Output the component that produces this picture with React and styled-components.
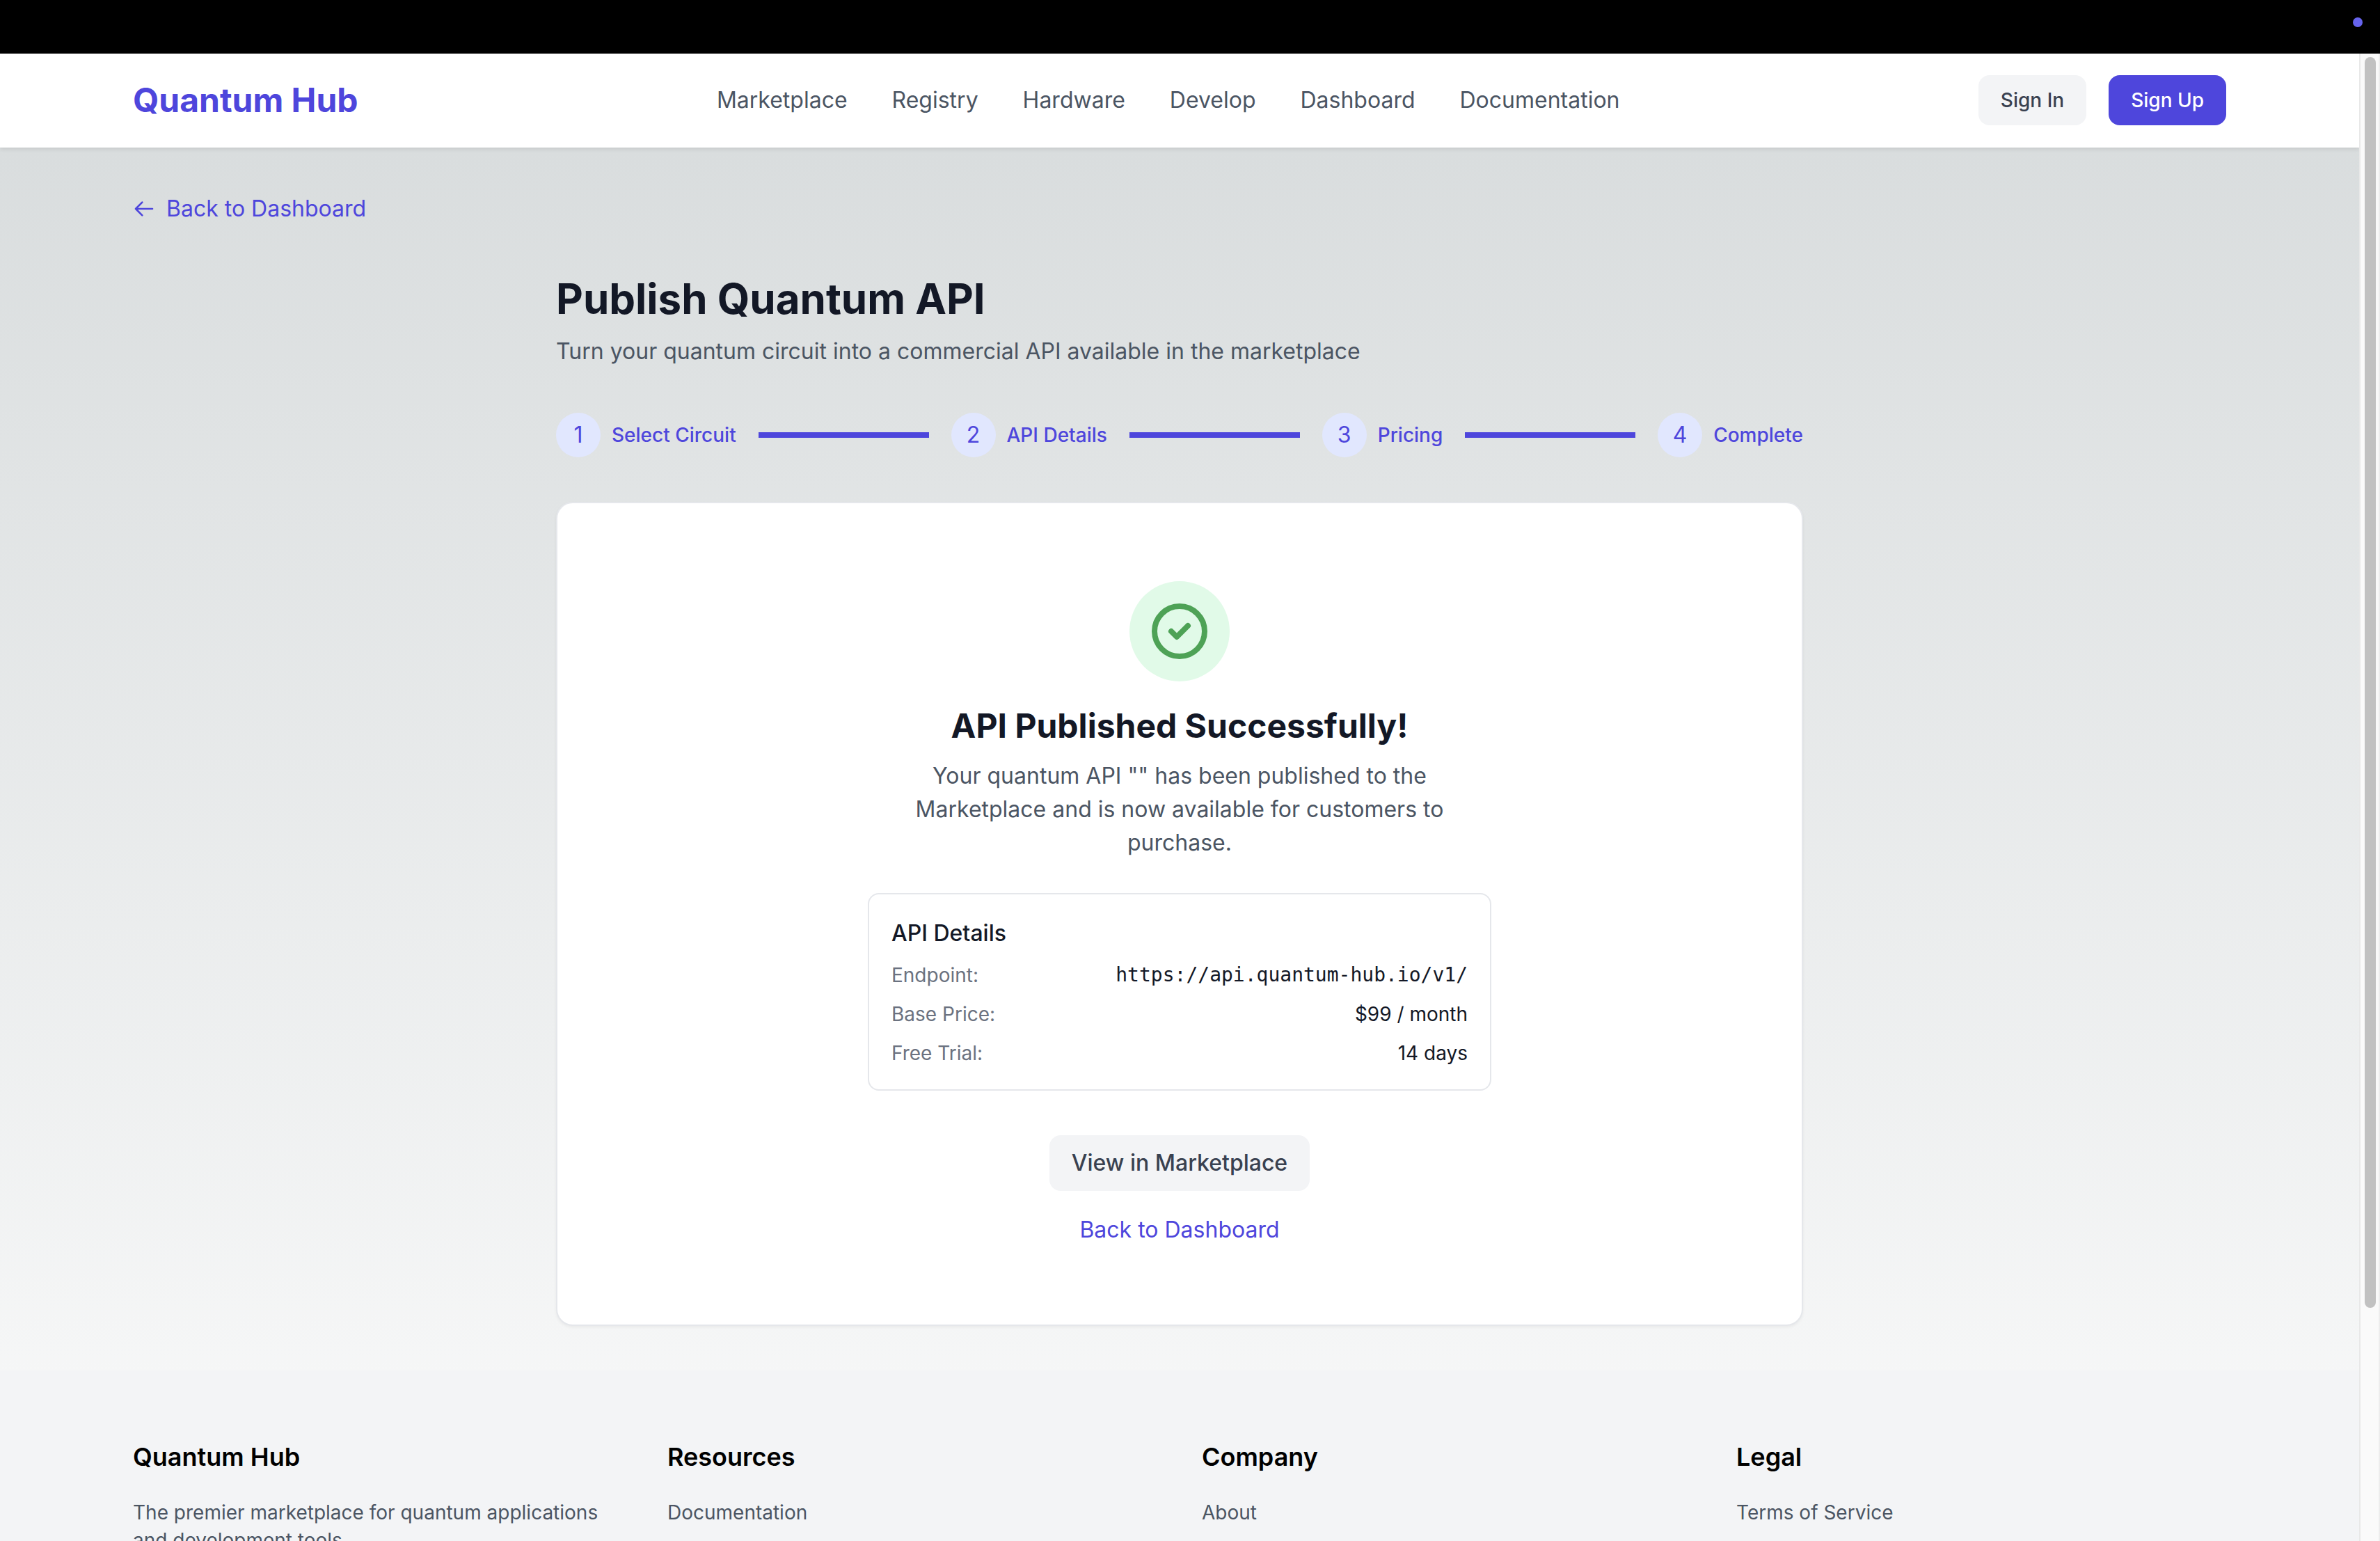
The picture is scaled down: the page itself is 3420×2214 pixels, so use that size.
import React from "react";
import styled, { createGlobalStyle } from "styled-components";

const sans = `Inter, "Liberation Sans", sans-serif`;
const indigo = "#4e46dc";

const GlobalStyle = createGlobalStyle`
  *, *::before, *::after { box-sizing: border-box; }
  body {
    margin: 0;
    overflow: hidden;
    background: #000;
    font-family: ${sans};
    font-size: 32px;
    line-height: 48px;
    color: #000;
  }
  h1, h2, h3, p, ul, ol, dl, dd { margin: 0; padding: 0; }
  ul, ol { list-style: none; }
  a { color: inherit; text-decoration: none; }
  button { font-family: inherit; border: 0; cursor: pointer; }
`;

const Screen = styled.div`
  height: 100vh;
  display: flex;
  flex-direction: column;
`;

const StatusBar = styled.div`
  flex: none;
  height: 77px;
  padding: 25px 25px 0;
  display: flex;
  justify-content: flex-end;
  background: #000;
`;

const StatusDot = styled.span`
  width: 14px;
  height: 14px;
  border-radius: 50%;
  background: #6663ec;
`;

const Viewport = styled.div`
  flex: 1;
  min-height: 0;
  display: flex;
`;

const Page = styled.div`
  flex: 1;
  min-width: 0;
  overflow: hidden;
  background: linear-gradient(to bottom, #d7dbdc, #ffffff) 0 0 / 100% 2500px no-repeat;
`;

const ScrollTrack = styled.div`
  flex: none;
  width: 30px;
  padding: 5px 4px 0 6px;
  background: #fafafa;
  border-left: 2px solid #e8e8e8;
  border-right: 2px solid #ededed;
`;

const ScrollThumb = styled.div`
  width: 16px;
  height: 84.3%;
  border-radius: 8px;
  background: #c1c1c1;
`;

const Container = styled.div`
  width: 100%;
  max-width: 3072px;
  margin: 0 auto;
  padding: 0 32px;
`;

const Header = styled.header`
  padding: 31px 0 32px;
  background: #fff;
  box-shadow: 0 2px 6px rgba(0, 0, 0, 0.1);
`;

const HeaderRow = styled(Container)`
  display: flex;
  align-items: center;
  justify-content: space-between;
`;

const Brand = styled.a`
  font-size: 48px;
  line-height: 64px;
  font-weight: 700;
  color: ${indigo};
`;

const Nav = styled.nav`
  display: flex;
  gap: 64px;
  color: #4b5563;
`;

const Actions = styled.div`
  display: flex;
  gap: 32px;
`;

const Button = styled.button`
  padding: 16px 32px;
  border-radius: 16px;
  font-size: ${(p) => (p.$large ? 32 : 28)}px;
  line-height: ${(p) => (p.$large ? 48 : 40)}px;
  font-weight: 500;
  color: ${(p) => (p.$primary ? "#fff" : "#394150")};
  background: ${(p) => (p.$primary ? indigo : "#f3f4f6")};
`;

const Main = styled.main`
  padding: 64px 0;
`;

const BackLink = styled.a`
  display: flex;
  align-items: center;
  gap: 16px;
  width: fit-content;
  margin-bottom: 69px;
  color: ${indigo};
`;

const Content = styled.div`
  width: 100%;
  max-width: 1792px;
  margin: 0 auto;
`;

const Title = styled.h1`
  margin-bottom: 16px;
  font-size: 60px;
  line-height: 72px;
  font-weight: 700;
  color: #131826;
`;

const Lead = styled.p`
  margin-bottom: 64px;
  color: #4b5563;
`;

const Steps = styled.ol`
  display: flex;
  align-items: center;
  gap: 32px;
  margin-bottom: 64px;
`;

const Step = styled.li`
  display: flex;
  align-items: center;
  gap: 16px;
  color: ${indigo};
`;

const StepNumber = styled.span`
  display: grid;
  place-items: center;
  width: 64px;
  height: 64px;
  border-radius: 50%;
  background: #e1e7fe;
`;

const StepLabel = styled.span`
  font-size: 28px;
  line-height: 40px;
  font-weight: 500;
`;

const StepLine = styled.li`
  flex: 1;
  height: 8px;
  background: ${indigo};
`;

const Card = styled.section`
  display: flex;
  flex-direction: column;
  align-items: center;
  padding: 112px 48px;
  background: #fff;
  border: 2px solid #e5e7eb;
  border-radius: 24px;
  box-shadow: 0 2px 4px rgba(0, 0, 0, 0.05);
`;

const SuccessBadge = styled.div`
  display: grid;
  place-items: center;
  width: 144px;
  height: 144px;
  margin-bottom: 32px;
  border-radius: 50%;
  background: #e1fae8;
  color: #4ea256;
`;

const CardTitle = styled.h2`
  margin-bottom: 16px;
  font-size: 48px;
  line-height: 64px;
  font-weight: 700;
  color: #131826;
`;

const Message = styled.p`
  max-width: 896px;
  margin-bottom: 48px;
  text-align: center;
  color: #4b5563;
`;

const Details = styled.div`
  width: 100%;
  max-width: 896px;
  margin-bottom: 64px;
  padding: 32px;
  border: 2px solid #e5e7eb;
  border-radius: 16px;
  color: #131826;
`;

const DetailsTitle = styled.h3`
  margin-bottom: 16px;
  font-size: 32px;
  line-height: 48px;
  font-weight: 500;
`;

const DetailsList = styled.dl`
  display: flex;
  flex-direction: column;
  gap: 16px;
  font-size: 28px;
  line-height: 40px;
`;

const DetailsRow = styled.div`
  display: flex;
  justify-content: space-between;
`;

const DetailsName = styled.dt`
  color: #6b7280;
`;

const DetailsValue = styled.dd`
  font-family: ${(p) => (p.$mono ? `"DejaVu Sans Mono", "Liberation Mono", monospace` : "inherit")};
`;

const CardActions = styled.div`
  display: flex;
  flex-direction: column;
  align-items: center;
  gap: 32px;
`;

const TextLink = styled.a`
  color: ${indigo};
`;

const Footer = styled.footer`
  padding: 96px 0;
  background: #f3f4f6;
`;

const FooterGrid = styled(Container)`
  display: grid;
  grid-template-columns: repeat(4, 1fr);
  gap: 64px;
`;

const FooterTitle = styled.h3`
  margin-bottom: 32px;
  font-size: 36px;
  line-height: 56px;
  font-weight: 600;
`;

const FooterText = styled.div`
  font-size: 28px;
  line-height: 40px;
  color: #4b5563;
`;

const NAV = ["Marketplace", "Registry", "Hardware", "Develop", "Dashboard", "Documentation"];
const STEPS = ["Select Circuit", "API Details", "Pricing", "Complete"];
const DETAILS = [
  { name: "Endpoint:", value: "https://api.quantum-hub.io/v1/", mono: true },
  { name: "Base Price:", value: "$99 / month" },
  { name: "Free Trial:", value: "14 days" },
];
const FOOTER_LINKS = [
  { title: "Resources", link: "Documentation" },
  { title: "Company", link: "About" },
  { title: "Legal", link: "Terms of Service" },
];

const ArrowLeftIcon = () => (
  <svg width="32" height="32" viewBox="0 0 24 24" fill="none" stroke="currentColor" strokeWidth="2" strokeLinecap="round" strokeLinejoin="round" aria-hidden="true">
    <path d="M10 19l-7-7m0 0l7-7m-7 7h18" />
  </svg>
);

const CheckCircleIcon = () => (
  <svg width="96" height="96" viewBox="0 0 24 24" fill="none" stroke="currentColor" strokeWidth="2" strokeLinecap="round" strokeLinejoin="round" aria-hidden="true">
    <path d="M9 12l2 2 4-4m6 2a9 9 0 11-18 0 9 9 0 0118 0z" />
  </svg>
);

export default function App() {
  return (
    <Screen>
      <GlobalStyle />
      <StatusBar>
        <StatusDot />
      </StatusBar>
      <Viewport>
        <Page>
          <Header>
            <HeaderRow>
              <Brand href="#">Quantum Hub</Brand>
              <Nav>
                {NAV.map((item) => (
                  <a key={item} href="#">{item}</a>
                ))}
              </Nav>
              <Actions>
                <Button type="button">Sign In</Button>
                <Button type="button" $primary>Sign Up</Button>
              </Actions>
            </HeaderRow>
          </Header>

          <Main>
            <Container>
              <BackLink href="#">
                <ArrowLeftIcon />
                Back to Dashboard
              </BackLink>
              <Content>
                <Title>Publish Quantum API</Title>
                <Lead>Turn your quantum circuit into a commercial API available in the marketplace</Lead>
                <Steps>
                  {STEPS.map((label, i) => (
                    <React.Fragment key={label}>
                      {i > 0 && <StepLine aria-hidden="true" />}
                      <Step>
                        <StepNumber>{i + 1}</StepNumber>
                        <StepLabel>{label}</StepLabel>
                      </Step>
                    </React.Fragment>
                  ))}
                </Steps>

                <Card>
                  <SuccessBadge>
                    <CheckCircleIcon />
                  </SuccessBadge>
                  <CardTitle>API Published Successfully!</CardTitle>
                  <Message>
                    Your quantum API "" has been published to the Marketplace and is now available for customers to purchase.
                  </Message>
                  <Details>
                    <DetailsTitle>API Details</DetailsTitle>
                    <DetailsList>
                      {DETAILS.map((row) => (
                        <DetailsRow key={row.name}>
                          <DetailsName>{row.name}</DetailsName>
                          <DetailsValue $mono={row.mono}>{row.value}</DetailsValue>
                        </DetailsRow>
                      ))}
                    </DetailsList>
                  </Details>
                  <CardActions>
                    <Button type="button" $large>View in Marketplace</Button>
                    <TextLink href="#">Back to Dashboard</TextLink>
                  </CardActions>
                </Card>
              </Content>
            </Container>
          </Main>

          <Footer>
            <FooterGrid>
              <div>
                <FooterTitle>Quantum Hub</FooterTitle>
                <FooterText>The premier marketplace for quantum applications and development tools.</FooterText>
              </div>
              {FOOTER_LINKS.map(({ title, link }) => (
                <div key={title}>
                  <FooterTitle>{title}</FooterTitle>
                  <FooterText as="ul">
                    <li><a href="#">{link}</a></li>
                  </FooterText>
                </div>
              ))}
            </FooterGrid>
          </Footer>
        </Page>
        <ScrollTrack aria-hidden="true">
          <ScrollThumb />
        </ScrollTrack>
      </Viewport>
    </Screen>
  );
}
